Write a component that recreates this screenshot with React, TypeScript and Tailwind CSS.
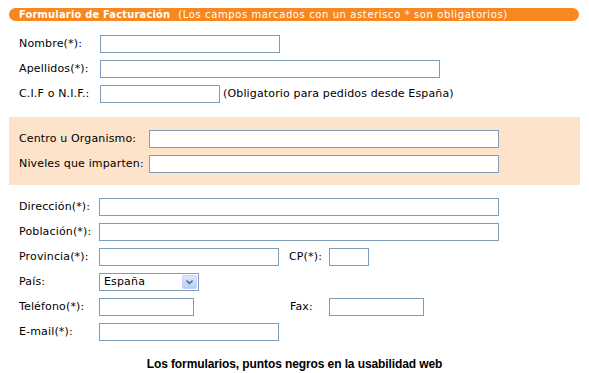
import React from 'react';

const Field: React.FC<{ w: number }> = ({ w }) => (
  <div className="h-[18px] border border-[#7f9db9] bg-white" style={{ width: w }} />
);

interface RowProps {
  label: string;
  labelW: number;
  children: React.ReactNode;
}

const Row: React.FC<RowProps> = ({ label, labelW, children }) => (
  <div className="flex items-center h-[18px]">
    <span className="shrink-0" style={{ width: labelW }}>
      {label}
    </span>
    {children}
  </div>
);

const CountrySelect: React.FC = () => (
  <div className="flex items-center w-[100px] h-[18px] border border-[#7f9db9] bg-white pl-[4px] pr-px">
    <span className="flex-1">España</span>
    <div className="w-[15px] h-[14px] rounded-[2px] bg-gradient-to-b from-[#dde8fb] to-[#b6cdf4] border border-[#c3d3fd] flex items-center justify-center">
      <svg width="7" height="5" viewBox="0 0 7 5">
        <path d="M0.5 0.5 L3.5 3.5 L6.5 0.5" stroke="#4d6185" strokeWidth="1.4" fill="none" />
      </svg>
    </div>
  </div>
);

export default function App() {
  return (
    <div className="w-[589px] h-[373px] bg-white text-[11px] tracking-[0.15px] text-black font-['DejaVu_Sans',sans-serif] pt-2">
      <div className="mx-[9px] w-[570px] h-[13px] rounded-full bg-[#f7871e] text-white flex items-center pl-[10px] leading-none text-[10px]">
        <span className="font-bold font-['DejaVu_Sans_Condensed',sans-serif] text-[11px] tracking-[0.2px]">
          Formulario de Facturación
        </span>
        <span className="ml-[8px] tracking-[0.6px]">(Los campos marcados con un asterisco * son obligatorios)</span>
      </div>

      <div className="pl-[19px] mt-[14px] flex flex-col gap-[7px]">
        <Row label="Nombre(*):" labelW={81}>
          <Field w={180} />
        </Row>
        <Row label="Apellidos(*):" labelW={81}>
          <Field w={340} />
        </Row>
        <Row label="C.I.F o N.I.F.:" labelW={81}>
          <Field w={120} />
          <span className="ml-[3px]">(Obligatorio para pedidos desde España)</span>
        </Row>
      </div>

      <div className="mx-[9px] mt-[14px] h-[68px] bg-[#fce3ca] pl-[10px] pt-[13px] flex flex-col gap-[7px]">
        <Row label="Centro u Organismo:" labelW={130}>
          <Field w={350} />
        </Row>
        <Row label="Niveles que imparten:" labelW={130}>
          <Field w={350} />
        </Row>
      </div>

      <div className="pl-[19px] mt-[13px] flex flex-col gap-[7px]">
        <Row label="Dirección(*):" labelW={80}>
          <Field w={400} />
        </Row>
        <Row label="Población(*):" labelW={80}>
          <Field w={400} />
        </Row>
        <Row label="Provincia(*):" labelW={80}>
          <Field w={180} />
          <span className="w-[40px] ml-[10px]">CP(*):</span>
          <Field w={40} />
        </Row>
        <Row label="País:" labelW={80}>
          <CountrySelect />
        </Row>
        <Row label="Teléfono(*):" labelW={80}>
          <Field w={95} />
          <span className="w-[39px] ml-[96px]">Fax:</span>
          <Field w={95} />
        </Row>
        <Row label="E-mail(*):" labelW={80}>
          <Field w={180} />
        </Row>
      </div>

      <p className="mt-[14px] text-center font-bold text-[12px] tracking-[-0.1px] font-['Liberation_Sans',sans-serif]">
        Los formularios, puntos negros en la usabilidad web
      </p>
    </div>
  );
}
